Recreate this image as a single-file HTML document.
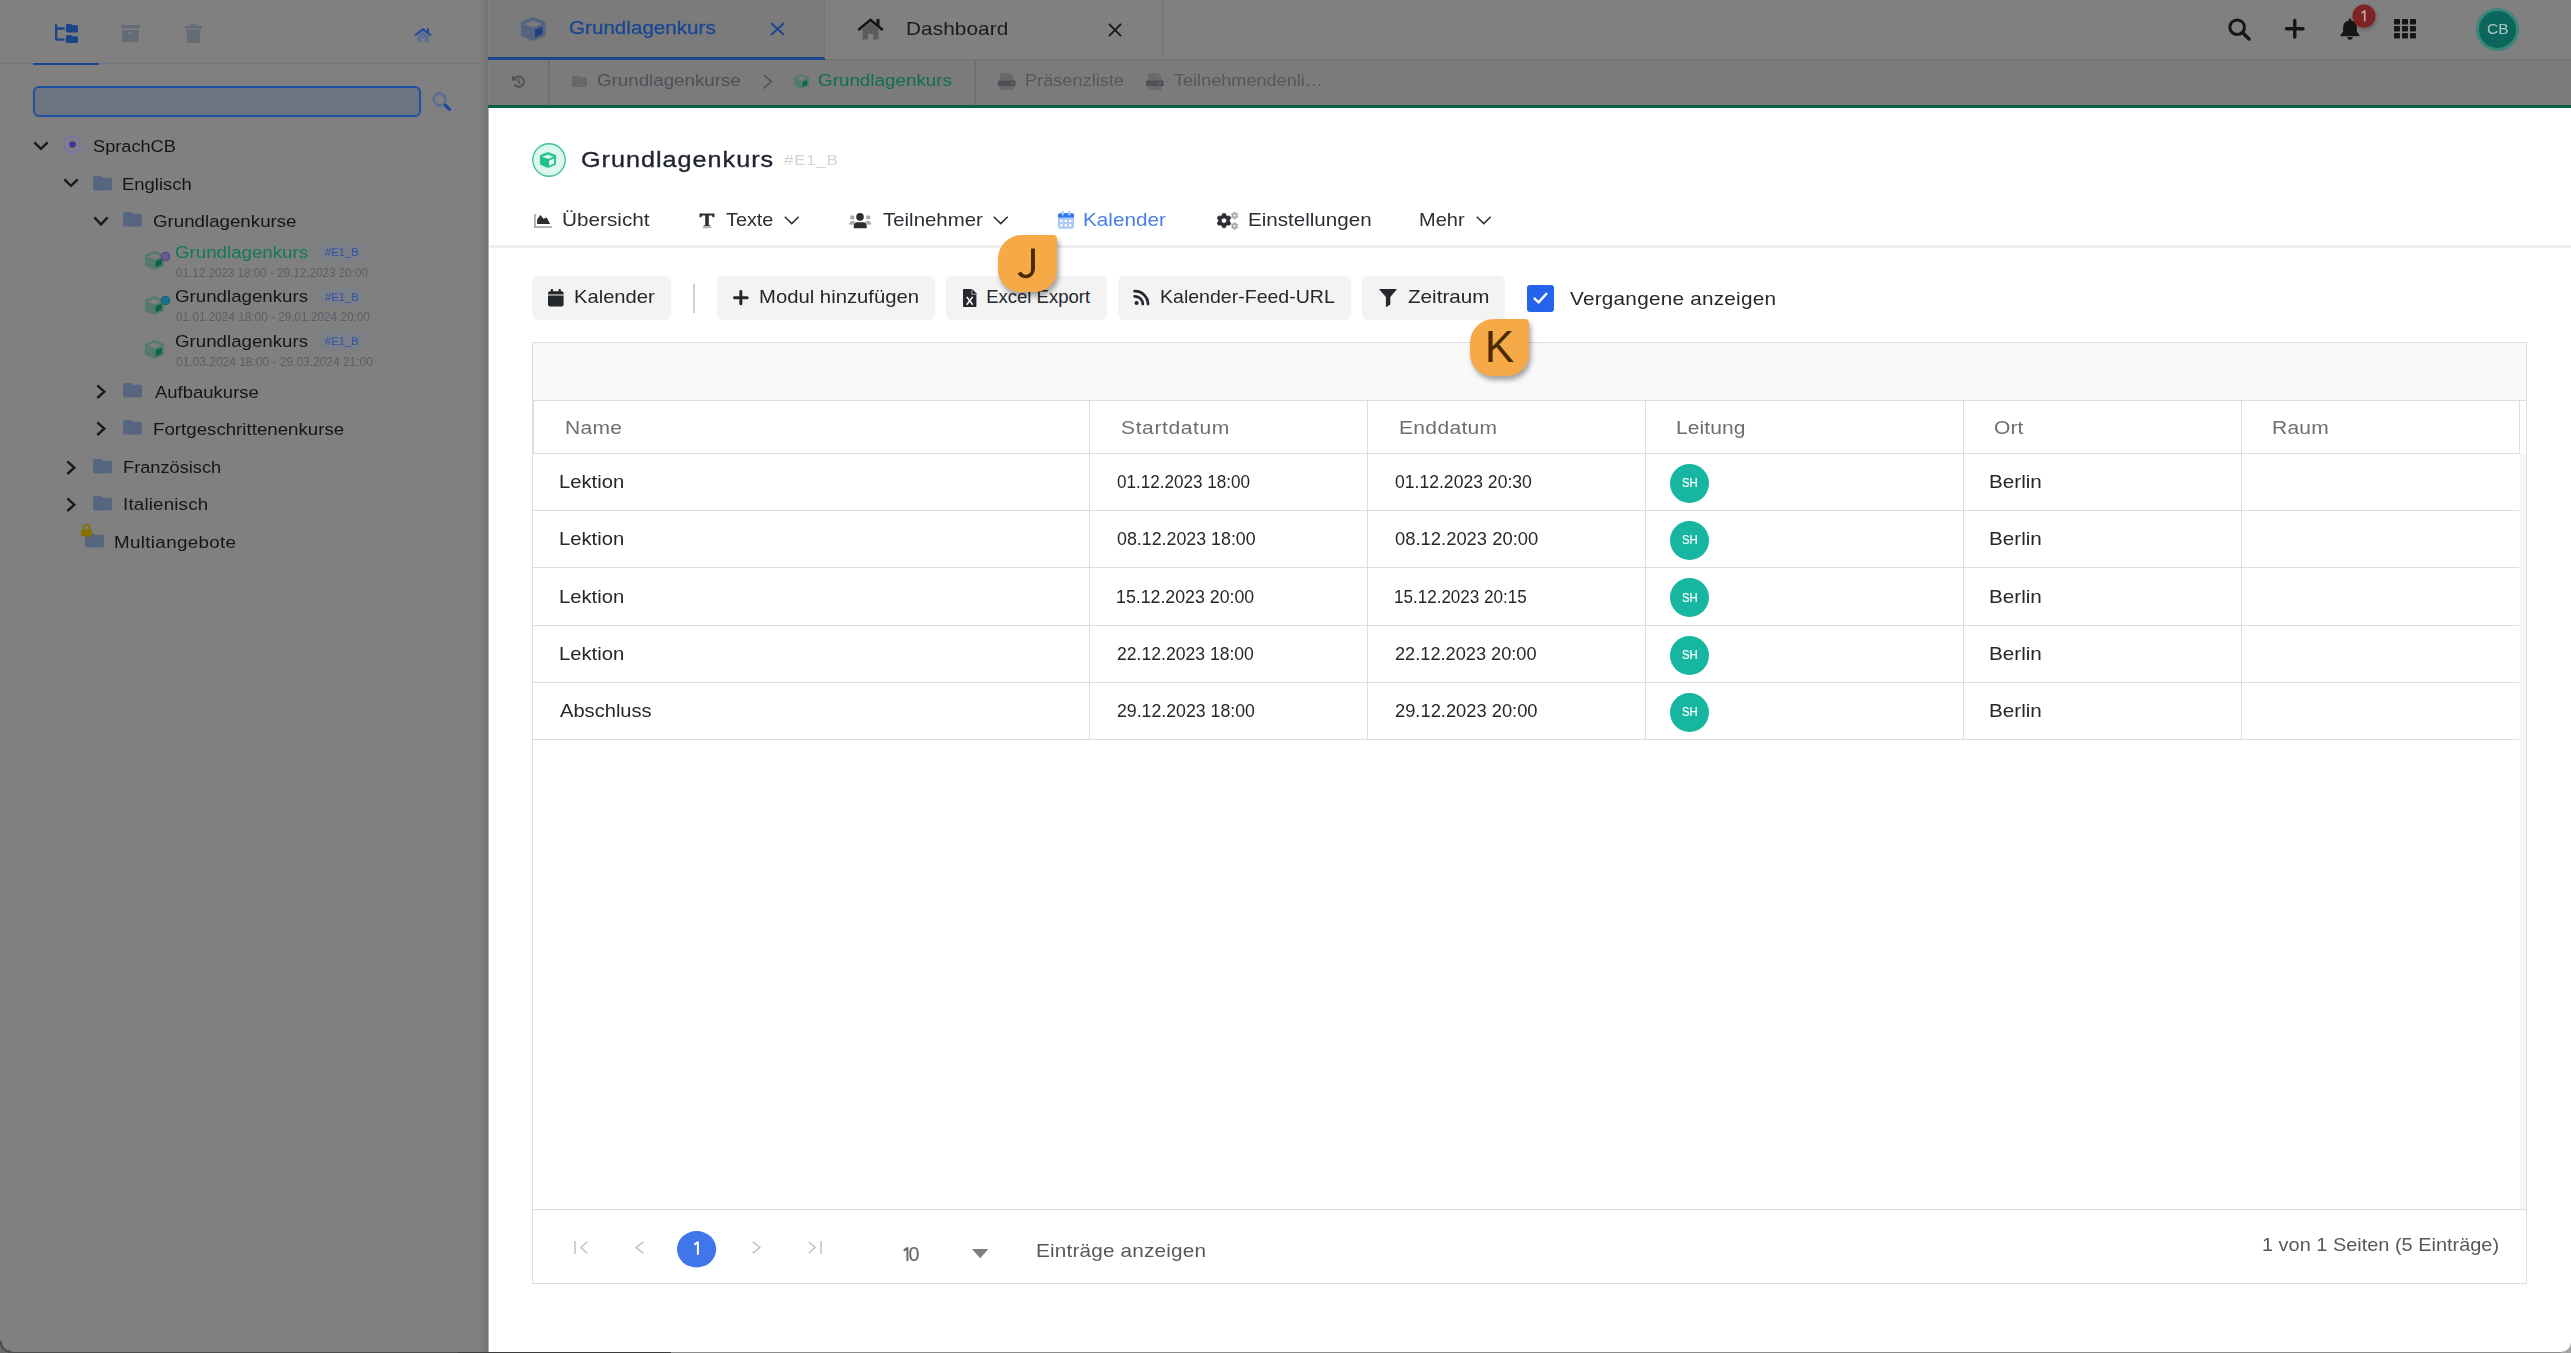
<!DOCTYPE html><html><head><meta charset="utf-8"><style>
html,body{margin:0;padding:0;width:2571px;height:1353px;overflow:hidden;background:#fff}
body{position:relative;font-family:"Liberation Sans",sans-serif}
.t{position:absolute;white-space:nowrap}
.r{position:absolute}
.i{position:absolute;overflow:visible}
</style></head><body>
<div class="r" style="left:0px;top:0px;width:489px;height:1353px;background:#808080;"></div>
<div class="r" style="left:489px;top:0px;width:2082px;height:59px;background:#808080;"></div>
<div class="r" style="left:489px;top:59px;width:2082px;height:1px;background:#6e747a;"></div>
<div class="r" style="left:489px;top:60px;width:2082px;height:45px;background:#7b7b7b;"></div>
<div class="r" style="left:488px;top:105px;width:2083px;height:3px;background:#0b5e45;"></div>
<div class="r" style="left:489px;top:108px;width:2082px;height:1245px;background:#ffffff;"></div>
<div class="r" style="left:478px;top:0px;width:10px;height:1353px;background:linear-gradient(to right, rgba(0,0,0,0) 0%, rgba(0,0,0,0.05) 60%, rgba(0,0,0,0.12) 100%);"></div>
<div class="r" style="left:487px;top:0px;width:1px;height:1353px;background:#727272;"></div>
<div class="r" style="left:488px;top:108px;width:1px;height:1245px;background:#b0b0b0;"></div>
<div class="r" style="left:0px;top:1352px;width:458px;height:1px;background:#4c4c4c;"></div>
<svg class="i" style="left:0px;top:1341px;" width="12" height="12" viewBox="0 0 12 12" preserveAspectRatio="none"><path d="M0,0 V12 H12 V11.5 H11.5 A11.5,11.5 0 0 1 0,0 Z" fill="#6a6a6a"/><path d="M11.5,11 A11,11 0 0 1 0.5,0" fill="none" stroke="#4c4c4c" stroke-width="2.2"/></svg>
<div class="r" style="left:458px;top:1352px;width:213px;height:1px;background:#3c3c3c;"></div>
<div class="r" style="left:671px;top:1352px;width:1900px;height:1px;background:#8c8c8c;"></div>
<svg class="i" style="left:55px;top:24px;" width="22" height="19.5" viewBox="0 0 22 19.5" preserveAspectRatio="none"><path d="M0,1 Q0,0 1,0 H1.3 Q2.3,0 2.3,1 V3.3 H9.7 V5.75 H2.3 V14.5 H9.7 V16.8 H2 Q0,16.8 0,14.8 Z" fill="#1c4589"/><path d="M11,1 Q11,0 12,0 h3.6 q0.8,0 1.3,0.6 l0.6,0.7 h4.4 q1.1,0 1.1,1.1 v5 q0,1 -1,1 h-9.9 q-1.1,0 -1.1,-1.1 z" fill="#1c4589"/><path d="M11,11.9 Q11,10.9 12,10.9 h3.6 q0.8,0 1.3,0.6 l0.6,0.7 h4.4 q1.1,0 1.1,1.1 v4.8 q0,1 -1,1 h-9.9 q-1.1,0 -1.1,-1.1 z" fill="#1c4589"/></svg>
<svg class="i" style="left:121px;top:25px;" width="19" height="17" viewBox="0 0 19 17" preserveAspectRatio="none"><rect x="0" y="0" width="19" height="3.6" rx="0.8" fill="#646b74"/><path d="M1.2,5 h16.6 v11 q0,1 -1,1 h-14.6 q-1,0 -1,-1 z" fill="#646b74"/><rect x="7" y="7.5" width="5" height="1.6" rx="0.8" fill="#7a8088"/></svg>
<svg class="i" style="left:185px;top:24px;" width="17" height="19" viewBox="0 0 17 19" preserveAspectRatio="none"><path d="M5.5,0.5 h6 l1,1.5 h4.5 v2.6 h-17 v-2.6 h4.5 z" fill="#646b74"/><path d="M1.4,5.6 h14.2 l-0.9,12.2 q-0.1,1.2 -1.3,1.2 h-9.8 q-1.2,0 -1.3,-1.2 z" fill="#646b74"/></svg>
<svg class="i" style="left:414px;top:28px;" width="18" height="14" viewBox="0 0 18 14" preserveAspectRatio="none"><path d="M3.5,7.5 L3.5,14 L7.3,14 L7.3,10.5 L10.7,10.5 L10.7,14 L14.5,14 L14.5,7.5 L9,3 Z" fill="#5a6f93"/><path d="M0.8,7.6 L9,1.2 L17.2,7.6" fill="none" stroke="#1e4a9a" stroke-width="1.9"/><rect x="13" y="0.2" width="2" height="4.5" fill="#1e4a9a"/></svg>
<div class="r" style="left:0px;top:63px;width:488px;height:1px;background:#6f7782;"></div>
<div class="r" style="left:33px;top:63px;width:66px;height:2px;background:#1c468f;"></div>
<div class="r" style="left:33px;top:86px;width:388px;height:31px;background:#6d7580;border:2px solid #1f4fa0;border-radius:6px;box-sizing:border-box;"></div>
<svg class="i" style="left:432px;top:92px;" width="19" height="19" viewBox="0 0 19 19" preserveAspectRatio="none"><circle cx="7.6" cy="7.6" r="5.9" fill="none" stroke="#5a6f93" stroke-width="2.8"/><path d="M13.3,13.3 L17.4,17.4" stroke="#1e4a9a" stroke-width="3.4" stroke-linecap="round"/></svg>
<svg class="i" style="left:34px;top:142px;" width="14" height="8" viewBox="0 0 14 8" preserveAspectRatio="none"><polyline points="1.2,1.2 7.0,6.8 12.8,1.2" fill="none" stroke="#1a1a1a" stroke-width="2.4" stroke-linecap="square" stroke-linejoin="miter"/></svg>
<svg class="i" style="left:63px;top:135px;" width="19" height="19" viewBox="0 0 19 19" preserveAspectRatio="none"><circle cx="9.5" cy="9.5" r="8.2" fill="none" stroke="#7c72a8" stroke-width="2.2"/><circle cx="9.5" cy="9.5" r="3.3" fill="#3c35a0"/></svg>
<div class="t" style="left:93.29px;top:138px;font-size:16.75px;line-height:17px;letter-spacing:0.000px;color:#151515;transform:scaleX(1.0857);transform-origin:0 0;">SprachCB</div>
<svg class="i" style="left:64px;top:179px;" width="14" height="8" viewBox="0 0 14 8" preserveAspectRatio="none"><polyline points="1.2,1.2 7.0,6.8 12.8,1.2" fill="none" stroke="#1a1a1a" stroke-width="2.4" stroke-linecap="square" stroke-linejoin="miter"/></svg>
<svg class="i" style="left:93px;top:175.5px;" width="19" height="14.5" viewBox="0 0 100 100" preserveAspectRatio="none"><path d="M0,12 Q0,0 12,0 L38,0 Q42,0 45,4 L50,12 L88,12 Q100,12 100,24 L100,88 Q100,100 88,100 L12,100 Q0,100 0,88 Z" fill="#57667f"/></svg>
<div class="t" style="left:122.41px;top:176px;font-size:16.75px;line-height:17px;letter-spacing:0.000px;color:#151515;transform:scaleX(1.1018);transform-origin:0 0;">Englisch</div>
<svg class="i" style="left:94px;top:217px;" width="14" height="8.6" viewBox="0 0 14 8.6" preserveAspectRatio="none"><polyline points="1.2,1.2 7.0,7.3999999999999995 12.8,1.2" fill="none" stroke="#1a1a1a" stroke-width="2.4" stroke-linecap="square" stroke-linejoin="miter"/></svg>
<svg class="i" style="left:123px;top:212.3px;" width="19" height="14.5" viewBox="0 0 100 100" preserveAspectRatio="none"><path d="M0,12 Q0,0 12,0 L38,0 Q42,0 45,4 L50,12 L88,12 Q100,12 100,24 L100,88 Q100,100 88,100 L12,100 Q0,100 0,88 Z" fill="#57667f"/></svg>
<div class="t" style="left:153.25px;top:213px;font-size:16.75px;line-height:17px;letter-spacing:-0.000px;color:#151515;transform:scaleX(1.1170);transform-origin:0 0;">Grundlagenkurse</div>
<svg class="i" style="left:145px;top:251.0px;" width="19" height="19" viewBox="0 0 100 100" preserveAspectRatio="none"><path d="M50,1 L99,21 L99,78 L50,99 L1,78 L1,21 Z" fill="#527a6d" stroke="#527a6d" stroke-width="2" stroke-linejoin="round"/><path d="M50,15 L86,29 L50,43 L13,29 Z" fill="#808080"/><path d="M57,53 L88,41 L88,72 L57,86 Z" fill="#0c6442"/></svg>
<svg class="i" style="left:160px;top:250.8px;" width="11" height="11" viewBox="0 0 11 11" preserveAspectRatio="none"><circle cx="5.5" cy="5.5" r="4.2" fill="#675b8c" stroke="#553c95" stroke-width="1.1"/></svg>
<div class="t" style="left:175.05px;top:244px;font-size:16.75px;line-height:17px;letter-spacing:0.000px;color:#0f7a55;transform:scaleX(1.1164);transform-origin:0 0;">Grundlagenkurs</div>
<div class="r" style="left:319.3px;top:243.3px;width:44.0px;height:18.099999999999966px;background:#7a7f88;border-radius:5px;"></div>
<div class="t" style="left:324.95px;top:247px;font-size:11.25px;line-height:11px;letter-spacing:0.000px;color:#3050a8;transform:scaleX(0.9955);transform-origin:0 0;">#E1_B</div>
<div class="t" style="left:175.56px;top:267px;font-size:12.00px;line-height:12px;letter-spacing:0.000px;color:#5c5e66;transform:scaleX(0.9715);transform-origin:0 0;">01.12.2023 18:00 - 29.12.2023 20:00</div>
<svg class="i" style="left:145px;top:295.5px;" width="19" height="19" viewBox="0 0 100 100" preserveAspectRatio="none"><path d="M50,1 L99,21 L99,78 L50,99 L1,78 L1,21 Z" fill="#527a6d" stroke="#527a6d" stroke-width="2" stroke-linejoin="round"/><path d="M50,15 L86,29 L50,43 L13,29 Z" fill="#808080"/><path d="M57,53 L88,41 L88,72 L57,86 Z" fill="#0c6442"/></svg>
<svg class="i" style="left:160px;top:295.3px;" width="11" height="11" viewBox="0 0 11 11" preserveAspectRatio="none"><circle cx="5.5" cy="5.5" r="4.2" fill="#1a7385" stroke="#0d6478" stroke-width="1.1"/></svg>
<div class="t" style="left:175.05px;top:288px;font-size:16.75px;line-height:17px;letter-spacing:0.000px;color:#151515;transform:scaleX(1.1164);transform-origin:0 0;">Grundlagenkurs</div>
<div class="r" style="left:319.3px;top:287.8px;width:44.0px;height:18.099999999999966px;background:#7a7f88;border-radius:5px;"></div>
<div class="t" style="left:324.95px;top:292px;font-size:11.25px;line-height:11px;letter-spacing:0.000px;color:#3050a8;transform:scaleX(0.9955);transform-origin:0 0;">#E1_B</div>
<div class="t" style="left:175.56px;top:311px;font-size:12.00px;line-height:12px;letter-spacing:0.000px;color:#5c5e66;transform:scaleX(0.9817);transform-origin:0 0;">01.01.2024 18:00 - 29.01.2024 20:00</div>
<svg class="i" style="left:145px;top:340.0px;" width="19" height="19" viewBox="0 0 100 100" preserveAspectRatio="none"><path d="M50,1 L99,21 L99,78 L50,99 L1,78 L1,21 Z" fill="#527a6d" stroke="#527a6d" stroke-width="2" stroke-linejoin="round"/><path d="M50,15 L86,29 L50,43 L13,29 Z" fill="#808080"/><path d="M57,53 L88,41 L88,72 L57,86 Z" fill="#0c6442"/></svg>
<div class="t" style="left:175.05px;top:333px;font-size:16.75px;line-height:17px;letter-spacing:0.000px;color:#151515;transform:scaleX(1.1164);transform-origin:0 0;">Grundlagenkurs</div>
<div class="r" style="left:319.3px;top:332.3px;width:44.0px;height:18.099999999999966px;background:#7a7f88;border-radius:5px;"></div>
<div class="t" style="left:324.95px;top:336px;font-size:11.25px;line-height:11px;letter-spacing:0.000px;color:#3050a8;transform:scaleX(0.9955);transform-origin:0 0;">#E1_B</div>
<div class="t" style="left:175.55px;top:356px;font-size:12.00px;line-height:12px;letter-spacing:0.000px;color:#5c5e66;transform:scaleX(0.9969);transform-origin:0 0;">01.03.2024 18:00 - 29.03.2024 21:00</div>
<svg class="i" style="left:97px;top:385.4px;" width="8.5" height="13.4" viewBox="0 0 8.5 13.4" preserveAspectRatio="none"><polyline points="1.2,1.2 7.3,6.7 1.2,12.200000000000001" fill="none" stroke="#1a1a1a" stroke-width="2.4" stroke-linecap="square" stroke-linejoin="miter"/></svg>
<svg class="i" style="left:123px;top:383.3px;" width="19" height="14.5" viewBox="0 0 100 100" preserveAspectRatio="none"><path d="M0,12 Q0,0 12,0 L38,0 Q42,0 45,4 L50,12 L88,12 Q100,12 100,24 L100,88 Q100,100 88,100 L12,100 Q0,100 0,88 Z" fill="#57667f"/></svg>
<div class="t" style="left:154.54px;top:384px;font-size:16.75px;line-height:17px;letter-spacing:0.000px;color:#151515;transform:scaleX(1.1040);transform-origin:0 0;">Aufbaukurse</div>
<svg class="i" style="left:97px;top:422.4px;" width="8.5" height="13.4" viewBox="0 0 8.5 13.4" preserveAspectRatio="none"><polyline points="1.2,1.2 7.3,6.7 1.2,12.200000000000001" fill="none" stroke="#1a1a1a" stroke-width="2.4" stroke-linecap="square" stroke-linejoin="miter"/></svg>
<svg class="i" style="left:123px;top:420.3px;" width="19" height="14.5" viewBox="0 0 100 100" preserveAspectRatio="none"><path d="M0,12 Q0,0 12,0 L38,0 Q42,0 45,4 L50,12 L88,12 Q100,12 100,24 L100,88 Q100,100 88,100 L12,100 Q0,100 0,88 Z" fill="#57667f"/></svg>
<div class="t" style="left:153.09px;top:421px;font-size:16.75px;line-height:17px;letter-spacing:0.000px;color:#151515;transform:scaleX(1.1161);transform-origin:0 0;">Fortgeschrittenenkurse</div>
<svg class="i" style="left:67px;top:460.6px;" width="8.5" height="13.4" viewBox="0 0 8.5 13.4" preserveAspectRatio="none"><polyline points="1.2,1.2 7.3,6.7 1.2,12.200000000000001" fill="none" stroke="#1a1a1a" stroke-width="2.4" stroke-linecap="square" stroke-linejoin="miter"/></svg>
<svg class="i" style="left:92.8px;top:458.5px;" width="19" height="14.5" viewBox="0 0 100 100" preserveAspectRatio="none"><path d="M0,12 Q0,0 12,0 L38,0 Q42,0 45,4 L50,12 L88,12 Q100,12 100,24 L100,88 Q100,100 88,100 L12,100 Q0,100 0,88 Z" fill="#57667f"/></svg>
<div class="t" style="left:122.93px;top:459px;font-size:16.75px;line-height:17px;letter-spacing:0.000px;color:#151515;transform:scaleX(1.0876);transform-origin:0 0;">Französisch</div>
<svg class="i" style="left:67px;top:497.6px;" width="8.5" height="13.4" viewBox="0 0 8.5 13.4" preserveAspectRatio="none"><polyline points="1.2,1.2 7.3,6.7 1.2,12.200000000000001" fill="none" stroke="#1a1a1a" stroke-width="2.4" stroke-linecap="square" stroke-linejoin="miter"/></svg>
<svg class="i" style="left:92.8px;top:495.5px;" width="19" height="14.5" viewBox="0 0 100 100" preserveAspectRatio="none"><path d="M0,12 Q0,0 12,0 L38,0 Q42,0 45,4 L50,12 L88,12 Q100,12 100,24 L100,88 Q100,100 88,100 L12,100 Q0,100 0,88 Z" fill="#57667f"/></svg>
<div class="t" style="left:122.66px;top:496px;font-size:16.75px;line-height:17px;letter-spacing:0.154px;color:#151515;transform:scaleX(1.1200);transform-origin:0 0;">Italienisch</div>
<svg class="i" style="left:84.8px;top:533.4px;" width="19" height="14.5" viewBox="0 0 100 100" preserveAspectRatio="none"><path d="M0,12 Q0,0 12,0 L38,0 Q42,0 45,4 L50,12 L88,12 Q100,12 100,24 L100,88 Q100,100 88,100 L12,100 Q0,100 0,88 Z" fill="#57667f"/></svg>
<svg class="i" style="left:81px;top:524px;" width="11" height="12.5" viewBox="0 0 11 12.5" preserveAspectRatio="none"><path d="M2.6,5.5 V3.6 A2.9,2.9 0 0 1 8.4,3.6 V5.5" fill="none" stroke="#857000" stroke-width="1.8"/><rect x="0" y="5.3" width="11" height="7.2" rx="1" fill="#857000"/></svg>
<div class="t" style="left:114.49px;top:534px;font-size:16.75px;line-height:17px;letter-spacing:0.310px;color:#151515;transform:scaleX(1.1200);transform-origin:0 0;">Multiangebote</div>
<div class="r" style="left:489px;top:0px;width:336px;height:57px;background:#7b7b7b;"></div>
<div class="r" style="left:488px;top:57px;width:337px;height:3px;background:#1c468f;"></div>
<div class="r" style="left:824px;top:0px;width:1px;height:58px;background:#737373;"></div>
<div class="r" style="left:1162px;top:0px;width:1px;height:58px;background:#737373;"></div>
<svg class="i" style="left:521px;top:17px;" width="24.5" height="24" viewBox="0 0 100 100" preserveAspectRatio="none"><path d="M50,1 L99,21 L99,78 L50,99 L1,78 L1,21 Z" fill="#55647e" stroke="#55647e" stroke-width="2" stroke-linejoin="round"/><path d="M50,15 L86,29 L50,43 L13,29 Z" fill="#7b7b7b"/><path d="M57,53 L88,41 L88,72 L57,86 Z" fill="#1c4080"/></svg>
<div class="t" style="left:568.94px;top:19px;font-size:18.50px;line-height:18px;letter-spacing:0.000px;color:#1b4692;-webkit-text-stroke:0.3px #1b4692;transform:scaleX(1.1150);transform-origin:0 0;">Grundlagenkurs</div>
<svg class="i" style="left:770px;top:22px;" width="15" height="14" viewBox="0 0 15 14" preserveAspectRatio="none"><path d="M0.95,0.95 L14.05,13.05 M14.05,0.95 L0.95,13.05" stroke="#1b4692" stroke-width="1.9" fill="none"/></svg>
<svg class="i" style="left:857px;top:18px;" width="27" height="22" viewBox="0 0 27 22" preserveAspectRatio="none"><path d="M5.5,11 L5.5,21.5 L11,21.5 L11,16 L16,16 L16,21.5 L21.5,21.5 L21.5,11 L13.5,4.5 Z" fill="#5c5c5c"/><path d="M1.2,12 L13.5,2 L25.8,12" fill="none" stroke="#151515" stroke-width="2.6"/><rect x="19.5" y="1" width="3" height="6.5" fill="#151515"/></svg>
<div class="t" style="left:905.72px;top:20px;font-size:18.50px;line-height:18px;letter-spacing:0.096px;color:#1a1a1a;transform:scaleX(1.1200);transform-origin:0 0;">Dashboard</div>
<svg class="i" style="left:1108px;top:23px;" width="14" height="14" viewBox="0 0 14 14" preserveAspectRatio="none"><path d="M0.95,0.95 L13.05,13.05 M13.05,0.95 L0.95,13.05" stroke="#1a1a1a" stroke-width="1.9" fill="none"/></svg>
<svg class="i" style="left:2228px;top:18px;" width="23" height="23" viewBox="0 0 23 23" preserveAspectRatio="none"><circle cx="9.2" cy="9.2" r="7.3" fill="none" stroke="#161616" stroke-width="3"/><path d="M14.5,14.5 L21,21" stroke="#161616" stroke-width="3.4" stroke-linecap="round"/></svg>
<svg class="i" style="left:2285px;top:19px;" width="19.5" height="19.5" viewBox="0 0 19.5 19.5" preserveAspectRatio="none"><path d="M9.75,1.5 V18 M1.5,9.75 H18" stroke="#161616" stroke-width="3.4" stroke-linecap="round"/></svg>
<svg class="i" style="left:2339.5px;top:18px;" width="20" height="22" viewBox="0 0 20 22" preserveAspectRatio="none"><path d="M10,0.5 q1.4,0 1.4,1.4 v0.9 a6.8,6.8 0 0 1 5.5,6.7 v4.2 l2.6,3.3 q0.6,0.9 -0.5,1.2 h-18 q-1.1,-0.3 -0.5,-1.2 l2.6,-3.3 v-4.2 a6.8,6.8 0 0 1 5.5,-6.7 v-0.9 q0,-1.4 1.4,-1.4 z" fill="#161616"/><path d="M7.3,19 h5.4 a2.7,2.7 0 0 1 -5.4,0 z" fill="#161616"/></svg>
<svg class="i" style="left:2351.5px;top:3.5px;filter:drop-shadow(1px 2px 2px rgba(0,0,0,0.25));" width="24" height="24" viewBox="0 0 24 24" preserveAspectRatio="none"><circle cx="12" cy="12" r="11.5" fill="#7f2424"/></svg>
<svg class="i" style="left:2360.6px;top:9.5px;" width="5.5" height="11.5" viewBox="0 0 5.5 11.5" preserveAspectRatio="none"><path d="M0.3,2.2 L3,0.2 H4.6 V11.5 H2.9 V2.5 L0.9,3.8 Z" fill="#c9a3a3"/></svg>
<svg class="i" style="left:2394px;top:19.3px;" width="22" height="19.5" viewBox="0 0 22 19.5" preserveAspectRatio="none"><rect x="0" y="0" width="6" height="5.6" rx="1" fill="#161616"/><rect x="8" y="0" width="6" height="5.6" rx="1" fill="#161616"/><rect x="16" y="0" width="6" height="5.6" rx="1" fill="#161616"/><rect x="0" y="7" width="6" height="5.6" rx="1" fill="#161616"/><rect x="8" y="7" width="6" height="5.6" rx="1" fill="#161616"/><rect x="16" y="7" width="6" height="5.6" rx="1" fill="#161616"/><rect x="0" y="14" width="6" height="5.6" rx="1" fill="#161616"/><rect x="8" y="14" width="6" height="5.6" rx="1" fill="#161616"/><rect x="16" y="14" width="6" height="5.6" rx="1" fill="#161616"/></svg>
<svg class="i" style="left:2476px;top:8px;" width="43" height="43" viewBox="0 0 43 43" preserveAspectRatio="none"><circle cx="21.5" cy="21.5" r="20" fill="#0b675c" stroke="#3b867b" stroke-width="3"/></svg>
<div class="t" style="left:2487.24px;top:22px;font-size:14.25px;line-height:14px;letter-spacing:0.000px;color:#a9c8c3;transform:scaleX(1.0899);transform-origin:0 0;">CB</div>
<div class="r" style="left:548px;top:60px;width:2px;height:45px;background:#6f6f6f;"></div>
<div class="r" style="left:974px;top:60px;width:2px;height:45px;background:#6f6f6f;"></div>
<svg class="i" style="left:511.5px;top:74.5px;" width="13" height="13" viewBox="0 0 13 13" preserveAspectRatio="none"><path d="M2.2,4.2 A5.2,5.2 0 1 1 2.6,9.6" fill="none" stroke="#4e5058" stroke-width="1.8"/><path d="M0,0.6 L0,5.6 L5,5.6 Z" fill="#4e5058"/><path d="M6.5,3.5 V6.8 L8.8,9" fill="none" stroke="#4e5058" stroke-width="1.6"/></svg>
<svg class="i" style="left:572px;top:75.8px;" width="15" height="11" viewBox="0 0 100 100" preserveAspectRatio="none"><path d="M0,12 Q0,0 12,0 L38,0 Q42,0 45,4 L50,12 L88,12 Q100,12 100,24 L100,88 Q100,100 88,100 L12,100 Q0,100 0,88 Z" fill="#67686b"/></svg>
<div class="t" style="left:597.25px;top:72px;font-size:16.75px;line-height:17px;letter-spacing:0.000px;color:#4e5058;transform:scaleX(1.1186);transform-origin:0 0;">Grundlagenkurse</div>
<svg class="i" style="left:763px;top:74px;" width="9" height="15.2" viewBox="0 0 9 15.2" preserveAspectRatio="none"><polyline points="0.7,0.7 8.2,7.6 0.7,14.5" fill="none" stroke="#4e5058" stroke-width="1.4"/></svg>
<svg class="i" style="left:794px;top:74px;" width="15" height="15" viewBox="0 0 100 100" preserveAspectRatio="none"><path d="M50,1 L99,21 L99,78 L50,99 L1,78 L1,21 Z" fill="#527a6d" stroke="#527a6d" stroke-width="2" stroke-linejoin="round"/><path d="M50,15 L86,29 L50,43 L13,29 Z" fill="#7b7b7b"/><path d="M57,53 L88,41 L88,72 L57,86 Z" fill="#0b6644"/></svg>
<div class="t" style="left:818.25px;top:72px;font-size:16.75px;line-height:17px;letter-spacing:0.033px;color:#0d7048;transform:scaleX(1.1200);transform-origin:0 0;">Grundlagenkurs</div>
<svg class="i" style="left:998px;top:73px;" width="17.5" height="17" viewBox="0 0 17.5 17" preserveAspectRatio="none"><path d="M2.2,0 h9.5 l3.6,3.2 v4.8 h-13.1 z" fill="#69696c"/><rect x="0" y="7.5" width="17.5" height="5.7" rx="0.8" fill="#515057"/><rect x="13" y="9.5" width="2" height="1.4" fill="#77777a"/><rect x="2.2" y="13" width="13.1" height="4" fill="#69696c"/></svg>
<div class="t" style="left:1024.84px;top:72px;font-size:16.75px;line-height:17px;letter-spacing:0.000px;color:#55575d;transform:scaleX(1.0847);transform-origin:0 0;">Präsenzliste</div>
<svg class="i" style="left:1146px;top:73px;" width="17.5" height="17" viewBox="0 0 17.5 17" preserveAspectRatio="none"><path d="M2.2,0 h9.5 l3.6,3.2 v4.8 h-13.1 z" fill="#69696c"/><rect x="0" y="7.5" width="17.5" height="5.7" rx="0.8" fill="#515057"/><rect x="13" y="9.5" width="2" height="1.4" fill="#77777a"/><rect x="2.2" y="13" width="13.1" height="4" fill="#69696c"/></svg>
<div class="t" style="left:1173.62px;top:72px;font-size:16.75px;line-height:17px;letter-spacing:0.000px;color:#55575d;transform:scaleX(1.0799);transform-origin:0 0;">Teilnehmendenli…</div>
<svg class="i" style="left:531.5px;top:142.5px;" width="34" height="34" viewBox="0 0 34 34" preserveAspectRatio="none"><circle cx="17" cy="17" r="16.2" fill="#dcf7ee" stroke="#3cc692" stroke-width="1.4"/></svg>
<svg class="i" style="left:540px;top:152px;" width="16" height="16" viewBox="0 0 100 100" preserveAspectRatio="none"><path d="M50,1 L99,21 L99,78 L50,99 L1,78 L1,21 Z" fill="#1dbf8a" stroke="#1dbf8a" stroke-width="2" stroke-linejoin="round"/><path d="M50,15 L86,29 L50,43 L13,29 Z" fill="#dcf7ee"/><path d="M57,53 L88,41 L88,72 L57,86 Z" fill="#e6faf3"/></svg>
<div class="t" style="left:580.91px;top:149px;font-size:22.50px;line-height:22px;letter-spacing:0.884px;color:#1f2330;-webkit-text-stroke:0.35px #1f2330;transform:scaleX(1.1200);transform-origin:0 0;">Grundlagenkurs</div>
<div class="t" style="left:783.84px;top:152px;font-size:15.25px;line-height:15px;letter-spacing:0.561px;color:#d1d5db;transform:scaleX(1.1200);transform-origin:0 0;">#E1_B</div>
<svg class="i" style="left:534px;top:214px;" width="18" height="14" viewBox="0 0 18 14" preserveAspectRatio="none"><path d="M0.9,0 V13.1 H17.8" fill="none" stroke="#a9aaac" stroke-width="1.8"/><path d="M3.1,9.9 V5.5 L6.4,1.1 L9.6,4.8 L12.6,3.6 L16.2,9.9 Z" fill="#2b2e33"/></svg>
<div class="t" style="left:561.93px;top:211px;font-size:18.50px;line-height:18px;letter-spacing:0.001px;color:#2b2e33;transform:scaleX(1.1200);transform-origin:0 0;">Übersicht</div>
<svg class="i" style="left:698.5px;top:213px;" width="16.5" height="15.5" viewBox="0 0 16.5 15.5" preserveAspectRatio="none"><path d="M0.5,0.5 H15.5 V4.2 H13.6 L13,2.6 H9.8 V12.3 H11.3 V13.3 H4.7 V12.3 H6.2 V2.6 H3 L2.4,4.2 H0.5 Z" fill="#2b2e33"/><rect x="3.6" y="13.6" width="8.8" height="1.6" fill="#a9aaac"/></svg>
<div class="t" style="left:725.87px;top:211px;font-size:18.50px;line-height:18px;letter-spacing:0.000px;color:#2b2e33;transform:scaleX(1.0721);transform-origin:0 0;">Texte</div>
<svg class="i" style="left:784px;top:216.3px;" width="15.5" height="8.5" viewBox="0 0 15.5 8.5" preserveAspectRatio="none"><polyline points="0.8,0.8 7.75,7.6 14.7,0.8" fill="none" stroke="#2b2e33" stroke-width="1.5"/></svg>
<svg class="i" style="left:849px;top:213px;" width="22.5" height="16" viewBox="0 0 22.5 16" preserveAspectRatio="none"><circle cx="3.3" cy="4.4" r="2.2" fill="#a9aaac"/><circle cx="19.2" cy="4.4" r="2.2" fill="#a9aaac"/><path d="M0,11.5 Q0.6,8 3.2,8 H6 L4.5,11.8 Z" fill="#a9aaac"/><path d="M22.5,11.5 Q21.9,8 19.3,8 H16.5 L18,11.8 Z" fill="#a9aaac"/><circle cx="11" cy="3.9" r="3.8" fill="#2b2e33"/><path d="M4.8,13.3 Q4.8,9.2 8,9.2 H14.5 Q17.7,9.2 17.7,13.3 V15.3 H4.8 Z" fill="#2b2e33"/></svg>
<div class="t" style="left:882.56px;top:211px;font-size:18.50px;line-height:18px;letter-spacing:0.000px;color:#2b2e33;transform:scaleX(1.1036);transform-origin:0 0;">Teilnehmer</div>
<svg class="i" style="left:993px;top:216.3px;" width="15.5" height="8.5" viewBox="0 0 15.5 8.5" preserveAspectRatio="none"><polyline points="0.8,0.8 7.75,7.6 14.7,0.8" fill="none" stroke="#2b2e33" stroke-width="1.5"/></svg>
<svg class="i" style="left:1058px;top:211px;" width="16" height="17.8" viewBox="0 0 16 17.8" preserveAspectRatio="none"><rect x="0" y="2.3" width="16" height="15.5" rx="2" fill="#adc9f8"/><path d="M0,4.3 Q0,2.3 2,2.3 H14 Q16,2.3 16,4.3 V6.5 H0 Z" fill="#2f74f0"/><rect x="3.5" y="0" width="2.3" height="4.6" rx="0.8" fill="#adc9f8"/><rect x="10.2" y="0" width="2.3" height="4.6" rx="0.8" fill="#adc9f8"/><rect x="2.2" y="8.8" width="2.4" height="2.3" fill="#ffffff"/><rect x="6.6000000000000005" y="8.8" width="2.4" height="2.3" fill="#ffffff"/><rect x="11.0" y="8.8" width="2.4" height="2.3" fill="#ffffff"/><rect x="2.2" y="13.200000000000001" width="2.4" height="2.3" fill="#ffffff"/><rect x="6.6000000000000005" y="13.200000000000001" width="2.4" height="2.3" fill="#ffffff"/><rect x="11.0" y="13.200000000000001" width="2.4" height="2.3" fill="#ffffff"/></svg>
<div class="t" style="left:1083.02px;top:211px;font-size:18.50px;line-height:18px;letter-spacing:0.010px;color:#4a7ee6;transform:scaleX(1.1200);transform-origin:0 0;">Kalender</div>
<svg class="i" style="left:1215.5px;top:212px;" width="23" height="18" viewBox="0 0 23 18" preserveAspectRatio="none"><path d="M5.94,3.39 L6.71,1.42 L9.29,1.42 L10.06,3.39 L11.48,4.21 L13.58,3.89 L14.87,6.13 L13.54,7.78 L13.54,9.42 L14.87,11.07 L13.58,13.31 L11.48,12.99 L10.06,13.81 L9.29,15.78 L6.71,15.78 L5.94,13.81 L4.52,12.99 L2.42,13.31 L1.13,11.07 L2.46,9.42 L2.46,7.78 L1.13,6.13 L2.42,3.89 L4.52,4.21 Z M10.6,8.6 A2.6,2.6 0 1 0 5.4,8.6 A2.6,2.6 0 1 0 10.6,8.6 Z" fill="#2b2e33" fill-rule="evenodd" stroke="#2b2e33" stroke-width="0.6" stroke-linejoin="round"/><path d="M17.64,1.18 L17.98,0.16 L19.22,0.16 L19.56,1.18 L20.21,1.56 L21.27,1.34 L21.89,2.41 L21.17,3.22 L21.17,3.98 L21.89,4.79 L21.27,5.86 L20.21,5.64 L19.56,6.02 L19.22,7.04 L17.98,7.04 L17.64,6.02 L16.99,5.64 L15.93,5.86 L15.31,4.79 L16.03,3.98 L16.03,3.22 L15.31,2.41 L15.93,1.34 L16.99,1.56 Z M19.900000000000002,3.6 A1.3,1.3 0 1 0 17.3,3.6 A1.3,1.3 0 1 0 19.900000000000002,3.6 Z" fill="#a9aaac" fill-rule="evenodd" stroke="#a9aaac" stroke-width="0.6" stroke-linejoin="round"/><path d="M17.64,11.58 L17.98,10.56 L19.22,10.56 L19.56,11.58 L20.21,11.96 L21.27,11.74 L21.89,12.81 L21.17,13.62 L21.17,14.38 L21.89,15.19 L21.27,16.26 L20.21,16.04 L19.56,16.42 L19.22,17.44 L17.98,17.44 L17.64,16.42 L16.99,16.04 L15.93,16.26 L15.31,15.19 L16.03,14.38 L16.03,13.62 L15.31,12.81 L15.93,11.74 L16.99,11.96 Z M19.900000000000002,14 A1.3,1.3 0 1 0 17.3,14 A1.3,1.3 0 1 0 19.900000000000002,14 Z" fill="#a9aaac" fill-rule="evenodd" stroke="#a9aaac" stroke-width="0.6" stroke-linejoin="round"/></svg>
<div class="t" style="left:1248.23px;top:211px;font-size:18.50px;line-height:18px;letter-spacing:0.000px;color:#2b2e33;transform:scaleX(1.1125);transform-origin:0 0;">Einstellungen</div>
<div class="t" style="left:1419.28px;top:211px;font-size:18.50px;line-height:18px;letter-spacing:0.000px;color:#2b2e33;transform:scaleX(1.0805);transform-origin:0 0;">Mehr</div>
<svg class="i" style="left:1476px;top:216.3px;" width="15.5" height="8.5" viewBox="0 0 15.5 8.5" preserveAspectRatio="none"><polyline points="0.8,0.8 7.75,7.6 14.7,0.8" fill="none" stroke="#2b2e33" stroke-width="1.5"/></svg>
<div class="r" style="left:489px;top:245px;width:2082px;height:3px;background:#efefef;"></div>
<div class="r" style="left:532px;top:276px;width:139px;height:44px;background:#f3f3f3;border-radius:6px;"></div>
<svg class="i" style="left:548px;top:289px;" width="15.6" height="17.5" viewBox="0 0 15.6 17.5" preserveAspectRatio="none"><rect x="2.8" y="0" width="2.2" height="3.5" rx="0.6" fill="#24272c"/><rect x="10.6" y="0" width="2.2" height="3.5" rx="0.6" fill="#24272c"/><path d="M0,4.3 Q0,2.3 2,2.3 H13.6 Q15.6,2.3 15.6,4.3 V5.6 H0 Z" fill="#24272c"/><rect x="0" y="5.6" width="15.6" height="1.2" fill="#9c9ea2"/><path d="M0,6.8 H15.6 V15.5 Q15.6,17.5 13.6,17.5 H2 Q0,17.5 0,15.5 Z" fill="#24272c"/></svg>
<div class="t" style="left:573.77px;top:288px;font-size:18.50px;line-height:18px;letter-spacing:0.000px;color:#24272c;transform:scaleX(1.0893);transform-origin:0 0;">Kalender</div>
<div class="r" style="left:693px;top:283.6px;width:2px;height:29.099999999999966px;background:#d0d0d0;"></div>
<div class="r" style="left:717px;top:276px;width:218px;height:44px;background:#f3f3f3;border-radius:6px;"></div>
<svg class="i" style="left:732.8px;top:290px;" width="15.7" height="15.3" viewBox="0 0 15.7 15.3" preserveAspectRatio="none"><path d="M7.85,1.5 V13.8 M1.5,7.65 H14.2" stroke="#24272c" stroke-width="3" stroke-linecap="round"/></svg>
<div class="t" style="left:758.76px;top:288px;font-size:18.50px;line-height:18px;letter-spacing:0.000px;color:#24272c;transform:scaleX(1.0959);transform-origin:0 0;">Modul hinzufügen</div>
<div class="r" style="left:946px;top:276px;width:161px;height:44px;background:#f3f3f3;border-radius:6px;"></div>
<svg class="i" style="left:963px;top:289px;" width="13.4" height="18" viewBox="0 0 13.4 18" preserveAspectRatio="none"><path d="M1,0 H9.2 L13.4,4.2 V17 Q13.4,18 12.4,18 H1 Q0,18 0,17 V1 Q0,0 1,0 Z" fill="#24272c"/><path d="M8.9,0 V5.3 H13.6" fill="none" stroke="#9a9ea3" stroke-width="1.1"/><path d="M3.7,7.9 L9.7,15.8 M9.7,7.9 L3.7,15.8" stroke="#ffffff" stroke-width="1.5"/></svg>
<div class="t" style="left:986.20px;top:288px;font-size:18.50px;line-height:18px;letter-spacing:0.000px;color:#24272c;">Excel Export</div>
<div class="r" style="left:1118px;top:276px;width:233px;height:44px;background:#f3f3f3;border-radius:6px;"></div>
<svg class="i" style="left:1134.4px;top:289.9px;" width="16.3" height="15.3" viewBox="0 0 16.3 15.3" preserveAspectRatio="none"><circle cx="2.6" cy="13" r="2.1" fill="#24272c"/><path d="M0.6,6.3 H1 A7.8,7.8 0 0 1 8.8,14.1" fill="none" stroke="#24272c" stroke-width="2.7" stroke-linecap="round"/><path d="M0.6,1.2 H1 A13,13 0 0 1 14,14.1" fill="none" stroke="#24272c" stroke-width="2.7" stroke-linecap="round"/></svg>
<div class="t" style="left:1159.82px;top:288px;font-size:18.50px;line-height:18px;letter-spacing:0.000px;color:#24272c;transform:scaleX(1.0560);transform-origin:0 0;">Kalender-Feed-URL</div>
<div class="r" style="left:1362px;top:276px;width:143px;height:44px;background:#f3f3f3;border-radius:6px;"></div>
<svg class="i" style="left:1378.9px;top:288.7px;" width="18" height="18.2" viewBox="0 0 18 18.2" preserveAspectRatio="none"><path d="M0.8,0 H17.2 Q18,0 17.5,0.8 L11.3,8 V15.5 L6.9,18.2 V8 L0.5,0.8 Q0,0 0.8,0 Z" fill="#24272c"/></svg>
<div class="t" style="left:1407.53px;top:288px;font-size:18.50px;line-height:18px;letter-spacing:0.000px;color:#24272c;transform:scaleX(1.1152);transform-origin:0 0;">Zeitraum</div>
<div class="r" style="left:1527px;top:284.7px;width:27px;height:27.100000000000023px;background:#2563eb;border-radius:3px;"></div>
<svg class="i" style="left:1532px;top:290px;" width="17" height="16" viewBox="0 0 17 16" preserveAspectRatio="none"><polyline points="2.6,8.6 6.6,12.4 14.4,3.8" fill="none" stroke="#ffffff" stroke-width="2.4" stroke-linecap="round" stroke-linejoin="round"/></svg>
<div class="t" style="left:1569.79px;top:290px;font-size:18.50px;line-height:18px;letter-spacing:0.218px;color:#24272c;transform:scaleX(1.1200);transform-origin:0 0;">Vergangene anzeigen</div>
<div class="r" style="left:532px;top:342px;width:1995px;height:942px;background:#ffffff;border:1px solid #dedede;box-sizing:border-box;"></div>
<div class="r" style="left:533px;top:343px;width:1993px;height:57px;background:#f9f9f9;"></div>
<div class="r" style="left:533px;top:400px;width:1993px;height:1px;background:#dedede;"></div>
<div class="r" style="left:533px;top:453px;width:1987px;height:1px;background:#dedede;"></div>
<div class="r" style="left:533px;top:401px;width:1px;height:52px;background:#dedede;"></div>
<div class="r" style="left:1089px;top:401px;width:1px;height:52px;background:#dedede;"></div>
<div class="r" style="left:1367px;top:401px;width:1px;height:52px;background:#dedede;"></div>
<div class="r" style="left:1645px;top:401px;width:1px;height:52px;background:#dedede;"></div>
<div class="r" style="left:1963px;top:401px;width:1px;height:52px;background:#dedede;"></div>
<div class="r" style="left:2241px;top:401px;width:1px;height:52px;background:#dedede;"></div>
<div class="r" style="left:2519px;top:401px;width:1px;height:52px;background:#dedede;"></div>
<div class="r" style="left:1089px;top:454px;width:1px;height:285px;background:#dedede;"></div>
<div class="r" style="left:1367px;top:454px;width:1px;height:285px;background:#dedede;"></div>
<div class="r" style="left:1645px;top:454px;width:1px;height:285px;background:#dedede;"></div>
<div class="r" style="left:1963px;top:454px;width:1px;height:285px;background:#dedede;"></div>
<div class="r" style="left:2241px;top:454px;width:1px;height:285px;background:#dedede;"></div>
<div class="r" style="left:2519.5px;top:454px;width:6.5px;height:755px;background:#f5f5f5;"></div>
<div class="t" style="left:564.66px;top:418px;font-size:18.75px;line-height:19px;letter-spacing:0.307px;color:#6b6e72;transform:scaleX(1.1200);transform-origin:0 0;">Name</div>
<div class="t" style="left:1121.25px;top:418px;font-size:18.75px;line-height:19px;letter-spacing:0.555px;color:#6b6e72;transform:scaleX(1.1200);transform-origin:0 0;">Startdatum</div>
<div class="t" style="left:1398.56px;top:418px;font-size:18.75px;line-height:19px;letter-spacing:0.303px;color:#6b6e72;transform:scaleX(1.1200);transform-origin:0 0;">Enddatum</div>
<div class="t" style="left:1676.46px;top:418px;font-size:18.75px;line-height:19px;letter-spacing:0.089px;color:#6b6e72;transform:scaleX(1.1200);transform-origin:0 0;">Leitung</div>
<div class="t" style="left:1994.39px;top:418px;font-size:18.75px;line-height:19px;letter-spacing:0.109px;color:#6b6e72;transform:scaleX(1.1200);transform-origin:0 0;">Ort</div>
<div class="t" style="left:2272.36px;top:418px;font-size:18.75px;line-height:19px;letter-spacing:0.232px;color:#6b6e72;transform:scaleX(1.1200);transform-origin:0 0;">Raum</div>
<div class="r" style="left:533px;top:510px;width:1986px;height:1px;background:#dedede;"></div>
<div class="t" style="left:558.86px;top:473px;font-size:18.50px;line-height:18px;letter-spacing:0.000px;color:#24272c;transform:scaleX(1.0922);transform-origin:0 0;">Lektion</div>
<div class="t" style="left:1116.95px;top:473px;font-size:18.50px;line-height:18px;letter-spacing:0.000px;color:#24272c;transform:scaleX(0.9236);transform-origin:0 0;">01.12.2023 18:00</div>
<div class="t" style="left:1395.03px;top:473px;font-size:18.50px;line-height:18px;letter-spacing:0.000px;color:#24272c;transform:scaleX(0.9502);transform-origin:0 0;">01.12.2023 20:30</div>
<svg class="i" style="left:1669.8px;top:463.8px;" width="39" height="39" viewBox="0 0 39 39" preserveAspectRatio="none"><circle cx="19.5" cy="19.5" r="19.5" fill="#17b6a1"/></svg>
<div class="t" style="left:1682.30px;top:477px;font-size:12.50px;line-height:12px;letter-spacing:0.000px;color:#ffffff;-webkit-text-stroke:0.2px #fff;transform:scaleX(0.9051);transform-origin:0 0;">SH</div>
<div class="t" style="left:1989.23px;top:473px;font-size:18.50px;line-height:18px;letter-spacing:0.000px;color:#24272c;transform:scaleX(1.1166);transform-origin:0 0;">Berlin</div>
<div class="r" style="left:533px;top:567px;width:1986px;height:1px;background:#dedede;"></div>
<div class="t" style="left:558.86px;top:530px;font-size:18.50px;line-height:18px;letter-spacing:0.000px;color:#24272c;transform:scaleX(1.0922);transform-origin:0 0;">Lektion</div>
<div class="t" style="left:1116.93px;top:530px;font-size:18.50px;line-height:18px;letter-spacing:0.000px;color:#24272c;transform:scaleX(0.9628);transform-origin:0 0;">08.12.2023 18:00</div>
<div class="t" style="left:1395.00px;top:530px;font-size:18.50px;line-height:18px;letter-spacing:0.000px;color:#24272c;transform:scaleX(0.9944);transform-origin:0 0;">08.12.2023 20:00</div>
<svg class="i" style="left:1669.8px;top:521.1px;" width="39" height="39" viewBox="0 0 39 39" preserveAspectRatio="none"><circle cx="19.5" cy="19.5" r="19.5" fill="#17b6a1"/></svg>
<div class="t" style="left:1682.30px;top:534px;font-size:12.50px;line-height:12px;letter-spacing:0.000px;color:#ffffff;-webkit-text-stroke:0.2px #fff;transform:scaleX(0.9051);transform-origin:0 0;">SH</div>
<div class="t" style="left:1989.23px;top:530px;font-size:18.50px;line-height:18px;letter-spacing:0.000px;color:#24272c;transform:scaleX(1.1166);transform-origin:0 0;">Berlin</div>
<div class="r" style="left:533px;top:625px;width:1986px;height:1px;background:#dedede;"></div>
<div class="t" style="left:558.86px;top:588px;font-size:18.50px;line-height:18px;letter-spacing:0.000px;color:#24272c;transform:scaleX(1.0922);transform-origin:0 0;">Lektion</div>
<div class="t" style="left:1116.26px;top:588px;font-size:18.50px;line-height:18px;letter-spacing:0.000px;color:#24272c;transform:scaleX(0.9598);transform-origin:0 0;">15.12.2023 20:00</div>
<div class="t" style="left:1394.41px;top:588px;font-size:18.50px;line-height:18px;letter-spacing:0.000px;color:#24272c;transform:scaleX(0.9214);transform-origin:0 0;">15.12.2023 20:15</div>
<svg class="i" style="left:1669.8px;top:578.4px;" width="39" height="39" viewBox="0 0 39 39" preserveAspectRatio="none"><circle cx="19.5" cy="19.5" r="19.5" fill="#17b6a1"/></svg>
<div class="t" style="left:1682.30px;top:592px;font-size:12.50px;line-height:12px;letter-spacing:0.000px;color:#ffffff;-webkit-text-stroke:0.2px #fff;transform:scaleX(0.9051);transform-origin:0 0;">SH</div>
<div class="t" style="left:1989.23px;top:588px;font-size:18.50px;line-height:18px;letter-spacing:0.000px;color:#24272c;transform:scaleX(1.1166);transform-origin:0 0;">Berlin</div>
<div class="r" style="left:533px;top:682px;width:1986px;height:1px;background:#dedede;"></div>
<div class="t" style="left:558.86px;top:645px;font-size:18.50px;line-height:18px;letter-spacing:0.000px;color:#24272c;transform:scaleX(1.0922);transform-origin:0 0;">Lektion</div>
<div class="t" style="left:1116.70px;top:645px;font-size:18.50px;line-height:18px;letter-spacing:0.000px;color:#24272c;transform:scaleX(0.9505);transform-origin:0 0;">22.12.2023 18:00</div>
<div class="t" style="left:1394.77px;top:645px;font-size:18.50px;line-height:18px;letter-spacing:0.000px;color:#24272c;transform:scaleX(0.9828);transform-origin:0 0;">22.12.2023 20:00</div>
<svg class="i" style="left:1669.8px;top:635.7px;" width="39" height="39" viewBox="0 0 39 39" preserveAspectRatio="none"><circle cx="19.5" cy="19.5" r="19.5" fill="#17b6a1"/></svg>
<div class="t" style="left:1682.30px;top:649px;font-size:12.50px;line-height:12px;letter-spacing:0.000px;color:#ffffff;-webkit-text-stroke:0.2px #fff;transform:scaleX(0.9051);transform-origin:0 0;">SH</div>
<div class="t" style="left:1989.23px;top:645px;font-size:18.50px;line-height:18px;letter-spacing:0.000px;color:#24272c;transform:scaleX(1.1166);transform-origin:0 0;">Berlin</div>
<div class="r" style="left:533px;top:739px;width:1986px;height:1px;background:#dedede;"></div>
<div class="t" style="left:560.45px;top:702px;font-size:18.50px;line-height:18px;letter-spacing:0.000px;color:#24272c;transform:scaleX(1.0873);transform-origin:0 0;">Abschluss</div>
<div class="t" style="left:1116.69px;top:702px;font-size:18.50px;line-height:18px;letter-spacing:0.000px;color:#24272c;transform:scaleX(0.9575);transform-origin:0 0;">29.12.2023 18:00</div>
<div class="t" style="left:1394.76px;top:702px;font-size:18.50px;line-height:18px;letter-spacing:0.000px;color:#24272c;transform:scaleX(0.9898);transform-origin:0 0;">29.12.2023 20:00</div>
<svg class="i" style="left:1669.8px;top:693.0px;" width="39" height="39" viewBox="0 0 39 39" preserveAspectRatio="none"><circle cx="19.5" cy="19.5" r="19.5" fill="#17b6a1"/></svg>
<div class="t" style="left:1682.30px;top:706px;font-size:12.50px;line-height:12px;letter-spacing:0.000px;color:#ffffff;-webkit-text-stroke:0.2px #fff;transform:scaleX(0.9051);transform-origin:0 0;">SH</div>
<div class="t" style="left:1989.23px;top:702px;font-size:18.50px;line-height:18px;letter-spacing:0.000px;color:#24272c;transform:scaleX(1.1166);transform-origin:0 0;">Berlin</div>
<div class="r" style="left:533px;top:1209px;width:1993px;height:1px;background:#dedede;"></div>
<svg class="i" style="left:573.5px;top:1241.4px;" width="14" height="13" viewBox="0 0 14 13" preserveAspectRatio="none"><path d="M1,0 V13" stroke="#bfc0c2" stroke-width="1.5"/><polyline points="13.2,0.8 7,6.5 13.2,12.2" fill="none" stroke="#bfc0c2" stroke-width="1.5"/></svg>
<svg class="i" style="left:635px;top:1241.4px;" width="9" height="13" viewBox="0 0 9 13" preserveAspectRatio="none"><polyline points="8.2,0.8 1.2,6.5 8.2,12.2" fill="none" stroke="#bfc0c2" stroke-width="1.5"/></svg>
<svg class="i" style="left:676.9px;top:1230.6px;" width="39.2" height="36.5" viewBox="0 0 39.2 36.5" preserveAspectRatio="none"><ellipse cx="19.6" cy="18.25" rx="19.6" ry="18.25" fill="#4176ea"/></svg>
<svg class="i" style="left:692.5px;top:1241.4px;" width="7" height="13.8" viewBox="0 0 7 13.8" preserveAspectRatio="none"><path d="M1,2.6 L4.2,0.4 H5.9 V13.8 H3.9 V2.9 L1.6,4.4 Z" fill="#ffffff"/></svg>
<svg class="i" style="left:752px;top:1241.4px;" width="9" height="13" viewBox="0 0 9 13" preserveAspectRatio="none"><polyline points="0.8,0.8 7.8,6.5 0.8,12.2" fill="none" stroke="#bfc0c2" stroke-width="1.5"/></svg>
<svg class="i" style="left:808.2px;top:1241.4px;" width="14" height="13" viewBox="0 0 14 13" preserveAspectRatio="none"><path d="M13,0 V13" stroke="#bfc0c2" stroke-width="1.5"/><polyline points="0.8,0.8 7,6.5 0.8,12.2" fill="none" stroke="#bfc0c2" stroke-width="1.5"/></svg>
<svg class="i" style="left:902.6px;top:1247px;" width="6" height="14.1" viewBox="0 0 6 14.1" preserveAspectRatio="none"><path d="M0.4,2.6 L3.6,0.3 H5.4 V14.1 H3.5 V2.9 L1,4.5 Z" fill="#5d676e"/></svg>
<div class="t" style="left:908.45px;top:1244px;font-size:19.50px;line-height:20px;letter-spacing:0.000px;color:#5d676e;">0</div>
<svg class="i" style="left:971.6px;top:1249.4px;" width="16.4" height="9.2" viewBox="0 0 16.4 9.2" preserveAspectRatio="none"><path d="M0,0 H16.4 L8.2,9.2 Z" fill="#7d7f82"/></svg>
<div class="t" style="left:1035.62px;top:1242px;font-size:18.50px;line-height:18px;letter-spacing:0.160px;color:#55595e;transform:scaleX(1.1200);transform-origin:0 0;">Einträge anzeigen</div>
<div class="t" style="left:2261.69px;top:1236px;font-size:18.50px;line-height:18px;letter-spacing:0.000px;color:#55595e;transform:scaleX(1.0772);transform-origin:0 0;">1 von 1 Seiten (5 Einträge)</div>
<div class="r" style="left:998.3px;top:235.1px;width:58.59999999999991px;height:56.50000000000003px;background:#f6aa47;border-radius:24px 4px 22px 22px;box-shadow:2px 4px 5px rgba(0,0,0,0.35);"></div>
<svg class="i" style="left:1016px;top:247.5px;" width="21" height="32" viewBox="0 0 21 32" preserveAspectRatio="none"><path d="M15,0.6 H18.9 V21 A9.2,9.2 0 0 1 1.6,25.4 L5.1,23.6 A5.2,5.2 0 0 0 15,21 Z" fill="#4a2a00"/></svg>
<div class="r" style="left:1470.1px;top:319.1px;width:58.59999999999991px;height:56.5px;background:#f6aa47;border-radius:24px 4px 22px 22px;box-shadow:2px 4px 5px rgba(0,0,0,0.35);"></div>
<div class="t" style="left:1484.80px;top:325px;font-size:44.00px;line-height:44px;letter-spacing:0.000px;color:#4a2a00;">K</div>
<svg class="i" style="left:2561px;top:1342px;" width="10" height="11" viewBox="0 0 10 11" preserveAspectRatio="none"><path d="M10,0 V11 H0 V10 A10,10 0 0 0 10,0 Z" fill="#a3a3a3"/></svg>
</body></html>
